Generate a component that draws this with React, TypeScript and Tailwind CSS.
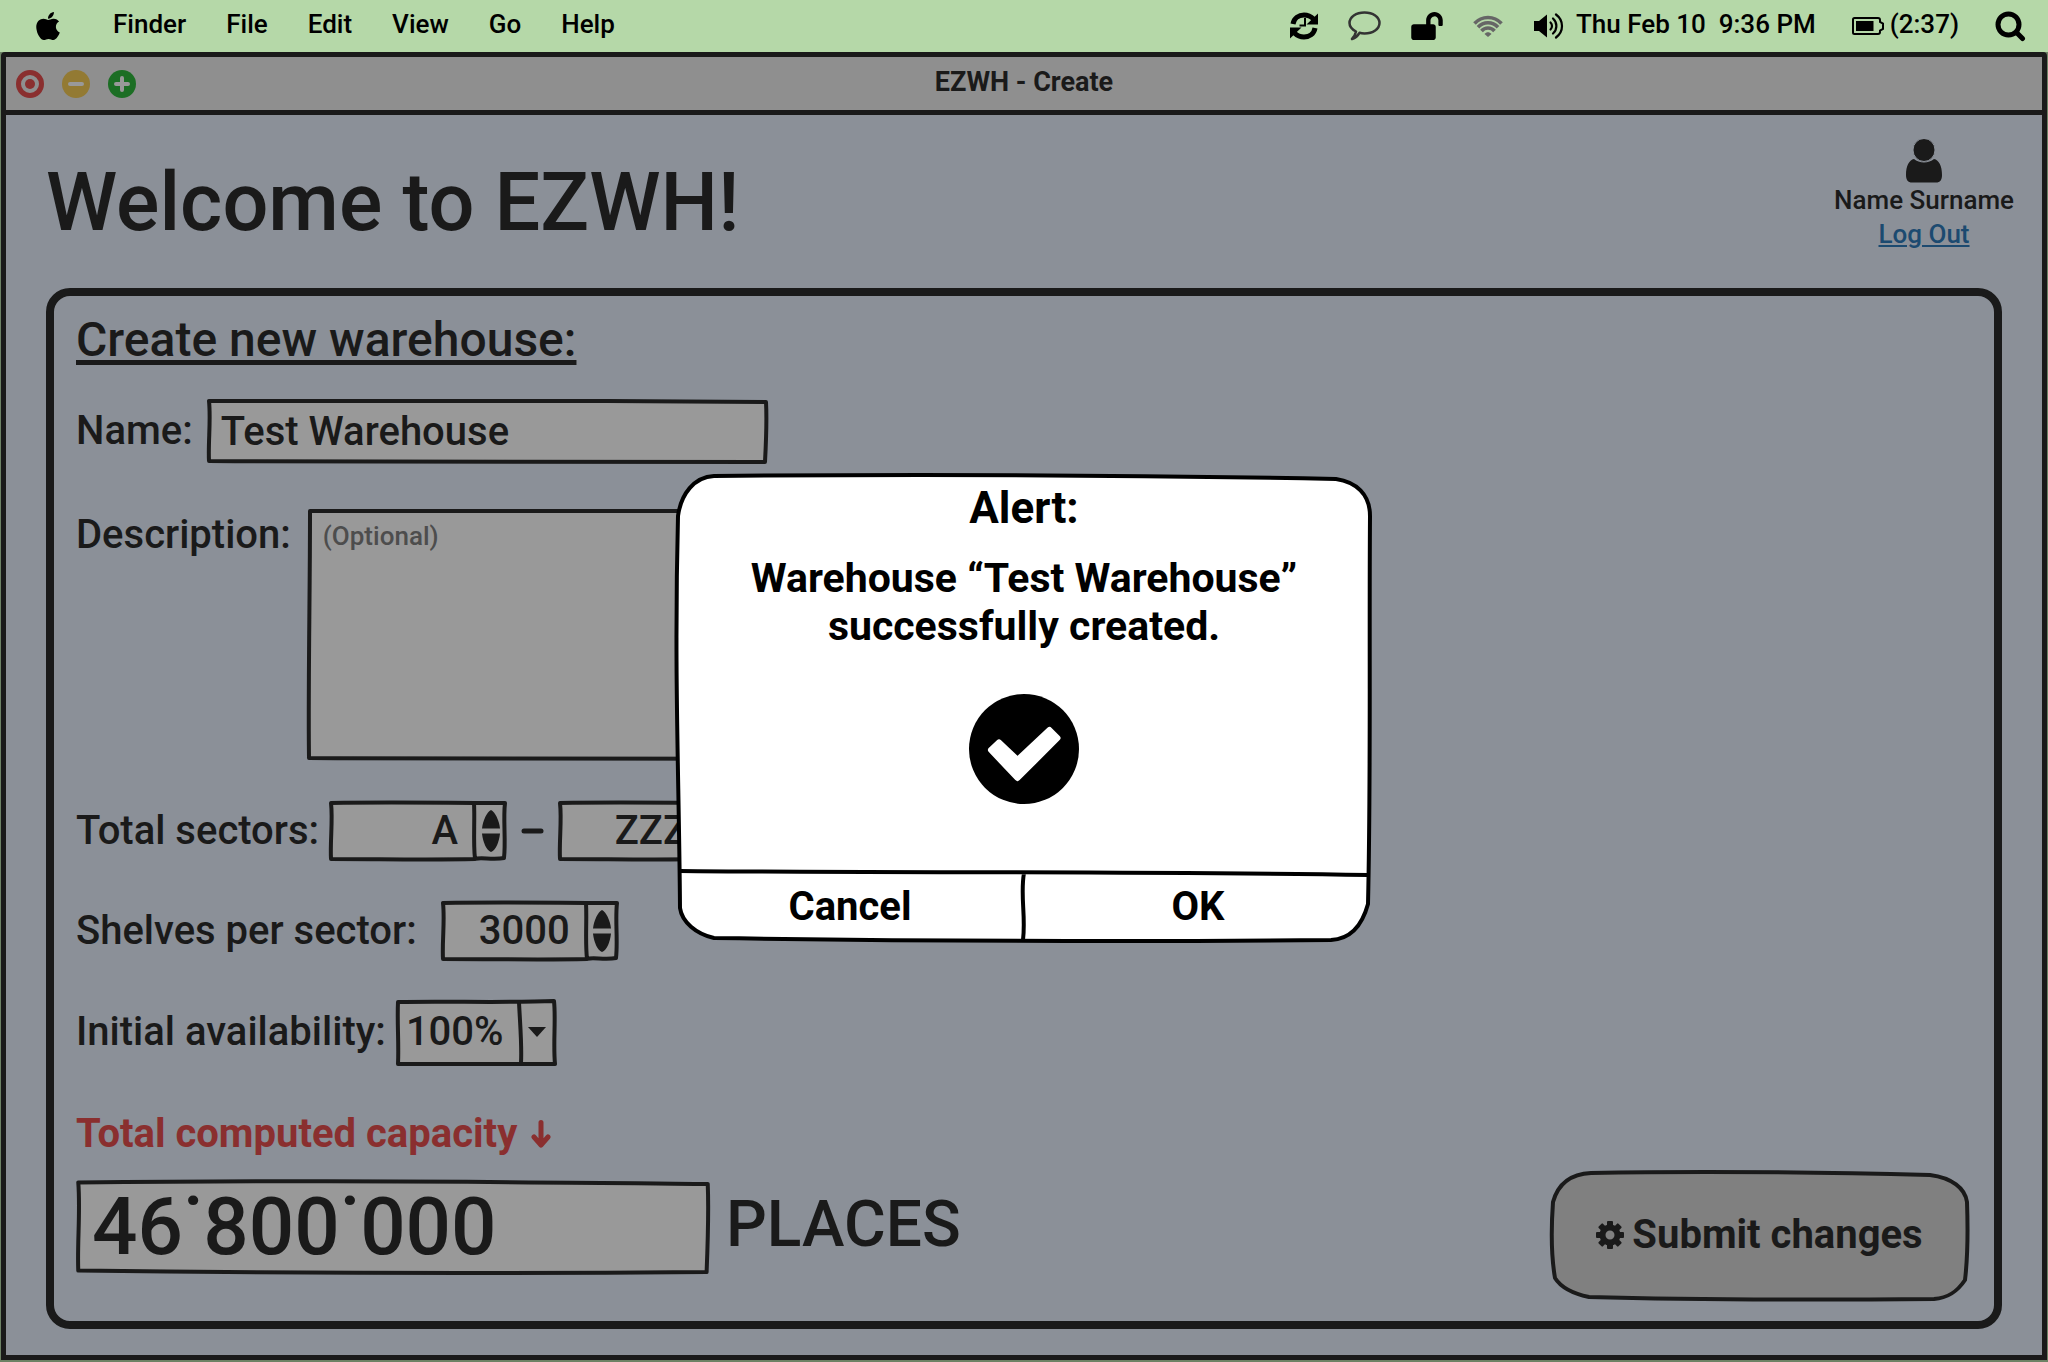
import type { ReactNode } from "react";
import { FaApple, FaLockOpen } from "react-icons/fa";

/* Hand-drawn outline that stretches to fill its positioned parent. */
function Sketch({ d, box = "0 0 100 100", fill = "none", stroke = "#1a1a1a", width = 4 }: {
  d: string; box?: string; fill?: string; stroke?: string; width?: number;
}) {
  return (
    <svg aria-hidden="true" viewBox={box} preserveAspectRatio="none" className="pointer-events-none absolute inset-0 h-full w-full overflow-visible">
      <path d={d} fill={fill} stroke={stroke} strokeWidth={width} strokeLinejoin="round" strokeLinecap="round" vectorEffect="non-scaling-stroke" />
    </svg>
  );
}

const SHORT_FRAME = "M2 3 C150 2 300 2 400 3 C470 3 530 4 558 4 C559 22 558 45 557 64 C400 65 200 65 2 63 C1 45 4 22 2 3Z";
const TALL_FRAME = "M3 2 C150 2 300 2 400 2 C470 2 530 3 558 3 C559 80 558 170 557 250 C400 251 200 251 2 249 C1 180 3 90 3 2Z";

function FieldFrame({ className, tall, children }: { className: string; tall?: boolean; children: ReactNode }) {
  return (
    <div className={`relative ${className}`}>
      <Sketch box={tall ? "0 0 560 252" : "0 0 560 66"} fill="#999999" d={tall ? TALL_FRAME : SHORT_FRAME} />
      {children}
    </div>
  );
}

function SyncIcon() {
  return (
    <svg viewBox="0 0 28 28" className="h-7 w-7" fill="none" aria-hidden="true">
      <path d="M3 12 C4 6 9 3 14 3 C18 3 21 4.500 23.500 7" stroke="#000" strokeWidth="5" />
      <path d="M28 1.500 V12.500 H16.500Z" fill="#000" />
      <path d="M25 16 C24 22 19 25 14 25 C10 25 7 23.500 4.500 21" stroke="#000" strokeWidth="5" />
      <path d="M0 26.500 V15.500 H11.500Z" fill="#000" />
      <path d="M15 6 V13.500 H9.500" stroke="#000" strokeWidth="2" />
    </svg>
  );
}

function ChatIcon() {
  return (
    <svg viewBox="0 0 33 30" className="h-[30px] w-[33px]" fill="none" aria-hidden="true">
      <path d="M8 20.500 C4 18.500 1.500 15.500 1.500 12 C1.500 6 8 1.500 16.500 1.500 C25 1.500 31.500 6 31.500 12 C31.500 18 25 22.500 16.500 22.500 C14.500 22.500 13 22.300 11.500 21.800 C10 24.500 7 27 4 28 C6 26 7.500 23 8 20.500Z" stroke="#333" strokeWidth="2.500" strokeLinejoin="round" />
    </svg>
  );
}

function WifiIcon() {
  return (
    <svg viewBox="0 0 30 22" className="h-[22px] w-[30px]" fill="none" stroke="#666" strokeWidth="3.600" aria-hidden="true">
      <path d="M1.500 8.500 C9 0.500 21 0.500 28.500 8.500" />
      <path d="M5 12.300 C10.500 6.300 19.500 6.300 25 12.300" />
      <path d="M8.500 16 C12 12 18 12 21.500 16" />
      <path d="M11.500 19 C13.500 16.700 16.500 16.700 18.500 19 L15 22Z" fill="#666" stroke="none" />
    </svg>
  );
}

function SpeakerIcon() {
  return (
    <svg viewBox="0 0 31 26" className="h-[26px] w-[31px]" fill="none" stroke="#000" strokeWidth="2.200" strokeLinecap="round" aria-hidden="true">
      <path d="M1 8 H6 L14 1.500 V24.500 L6 18 H1Z" fill="#000" stroke="none" />
      <path d="M17.500 9.500 C19.500 11.500 19.500 14.500 17.500 16.500" />
      <path d="M20 5.500 C24.500 9.500 24.500 16.500 20 20.500" />
      <path d="M23 1.500 C31 7.500 31 18.500 23 24.500" />
    </svg>
  );
}

function BatteryIcon() {
  return (
    <svg viewBox="0 0 32 18" className="h-[18px] w-8" fill="none" aria-hidden="true">
      <path d="M2.500 1 H26 Q28 1 28 3 V5 L31 6.500 V12 L28 13.500 V15 Q28 17 26 17 H2.500 Q1 17 1 15.500 V2.500 Q1 1 2.500 1Z" stroke="#000" strokeWidth="2" />
      <path d="M4 4 H21.500 V14 H4Z" fill="#000" />
    </svg>
  );
}

function SearchIcon() {
  return (
    <svg viewBox="0 0 31 31" className="h-[31px] w-[31px]" fill="none" stroke="#000" strokeWidth="5" strokeLinecap="round" aria-hidden="true">
      <circle cx="13.500" cy="13.500" r="10.500" />
      <path d="M21.500 21.500 L27.500 27.500" />
    </svg>
  );
}

function UserIcon() {
  return (
    <svg viewBox="0 0 36 44" className="h-11 w-9" fill="#1a1a1a" aria-hidden="true">
      <path d="M8 20 C13 24.500 23 24.500 28 20 C33 21 36 27 36 36 C36 41 34 43.500 30 43.500 H6 C2 43.500 0 41 0 36 C0 27 3 21 8 20Z" />
      <ellipse cx="18" cy="11" rx="11" ry="11.500" stroke="#8b9098" strokeWidth="1" />
    </svg>
  );
}

function GearIcon() {
  return (
    <svg viewBox="-14 -14 28 28" className="h-7 w-7" fill="#1a1a1a" aria-hidden="true">
      {[0, 45, 90, 135, 180, 225, 270, 315].map((a) => (
        <rect key={a} x="-3" y="-14" width="6" height="8" rx="1" transform={`rotate(${a})`} />
      ))}
      <circle r="7.500" fill="none" stroke="#1a1a1a" strokeWidth="6" />
    </svg>
  );
}

function Spinner({ id, label, value }: { id: string; label?: string; value: string }) {
  return (
    <div className="relative flex h-[60px] w-[178px]">
      <Sketch box="0 0 178 60" fill="#999999" d="M2 2 C60 1 120 2 176 2 C174 18 177 40 175 57 C165 59 150 56 146 58 C100 59 50 58 2 58 C1 40 4 20 2 2Z M145 2 C146 20 144 40 146 58" />
      <input id={id} aria-label={label} defaultValue={value} className="relative w-[145px] bg-transparent pr-4 text-right outline-none" />
      <div className="relative flex flex-1 flex-col items-center justify-center gap-1">
        <button type="button" aria-label="Increase" className="block">
          <svg viewBox="0 0 18 19" className="h-[19px] w-[18px]"><path d="M0 18.500 C1 10 5 2 9 0 C13 2 17 10 18 18.500Z" fill="#1a1a1a" /></svg>
        </button>
        <button type="button" aria-label="Decrease" className="block">
          <svg viewBox="0 0 18 19" className="h-[19px] w-[18px]"><path d="M0 0.500 C1 9 4 17 9 19 C14 17 17 9 18 0.500Z" fill="#1a1a1a" /></svg>
        </button>
      </div>
    </div>
  );
}

function MenuBar() {
  return (
    <header className="flex h-[52px] shrink-0 items-center justify-between bg-[#b5d8a8] pr-[22px] pl-8 text-[26px] leading-none font-medium text-black">
      <div className="flex items-center">
        <FaApple className="mr-[49px] h-8 w-8" aria-hidden="true" />
        <nav className="flex gap-10 pb-1">
          {["Finder", "File", "Edit", "View", "Go", "Help"].map((m) => (
            <button key={m} type="button">{m}</button>
          ))}
        </nav>
      </div>
      <div className="flex items-center">
        <div className="mr-3 flex items-center gap-[30px]">
          <SyncIcon />
          <ChatIcon />
          <FaLockOpen className="h-7 w-8" aria-hidden="true" />
          <WifiIcon />
          <SpeakerIcon />
        </div>
        <time className="pb-1 whitespace-pre">Thu Feb 10  9:36 PM</time>
        <span className="ml-9 flex items-center gap-1.5">
          <BatteryIcon />
          <span className="pb-1">(2:37)</span>
        </span>
        <button type="button" aria-label="Search" className="ml-9"><SearchIcon /></button>
      </div>
    </header>
  );
}

function TitleBar() {
  return (
    <div className="relative flex h-[58px] shrink-0 items-center border-b-[5px] border-[#1a1a1a] bg-[#8f8f8f] px-2.5">
      <div className="flex gap-[18px]">
        <button type="button" aria-label="Close">
          <svg viewBox="0 0 28 28" className="h-7 w-7"><circle cx="14" cy="14" r="11.500" fill="none" stroke="#8a2f2f" strokeWidth="5" /><circle cx="14" cy="14" r="5" fill="#8a2f2f" /></svg>
        </button>
        <button type="button" aria-label="Minimize">
          <svg viewBox="0 0 28 28" className="h-7 w-7"><circle cx="14" cy="14" r="14" fill="#937a33" /><path d="M8 14 H20" stroke="#999" strokeWidth="4" strokeLinecap="round" /></svg>
        </button>
        <button type="button" aria-label="Zoom">
          <svg viewBox="0 0 28 28" className="h-7 w-7"><circle cx="14" cy="14" r="14" fill="#1c6e24" /><path d="M8 14 H20 M14 8 V20" stroke="#999" strokeWidth="4" strokeLinecap="round" /></svg>
        </button>
      </div>
      <h2 className="absolute inset-x-0 pb-1 text-center text-[27px] leading-[30px] font-bold">EZWH - Create</h2>
    </div>
  );
}

function AlertDialog() {
  return (
    <div className="absolute inset-0 flex items-center justify-center pt-1">
      <div role="alertdialog" aria-labelledby="alert-title" aria-describedby="alert-text" className="relative flex h-[468px] w-[696px] flex-col text-center text-[40px] leading-12 font-bold text-black">
        <Sketch box="0 0 696 468" fill="#ffffff" stroke="#000000" d="M38 2 C250 0 450 1 660 5 C680 8 694 20 694 42 C693 180 695 300 692 430 C686 452 675 465 655 466 C450 468 250 467 38 464 C20 460 6 448 4 434 C3 300 -2 200 2 42 C5 20 18 3 38 2Z" />
        <div className="relative flex flex-1 flex-col items-center pt-1.5">
          <h2 id="alert-title" className="text-[44px] leading-[56px]">Alert:</h2>
          <p id="alert-text" className="mt-[18px] w-[600px] text-[41px]">Warehouse “Test Warehouse” <br />successfully created.</p>
          <svg viewBox="0 0 110 110" className="mt-11 h-[110px] w-[110px]" aria-hidden="true">
            <circle cx="55" cy="55" r="55" />
            <path d="M22 56 L30 48.500 L48.500 66 L80.500 36 L88.500 44 L48.500 84Z" fill="#fff" stroke="#fff" strokeWidth="6" strokeLinejoin="round" />
          </svg>
        </div>
        <div className="relative grid h-[71px] grid-cols-2">
          <Sketch box="0 0 696 71" stroke="#000000" d="M4 0 C200 2 450 0 692 4 M348 2 C344 24 350 45 347 69" />
          <button type="button" className="relative">Cancel</button>
          <button type="button" className="relative">OK</button>
        </div>
      </div>
    </div>
  );
}

export default function App() {
  return (
    <div className="flex min-h-screen flex-col bg-[#6d8265] font-['Roboto',sans-serif] text-[#1a1a1a]">
      <MenuBar />
      <main className="relative mx-px mb-0.5 flex flex-1 flex-col rounded-t-sm border-[5px] border-[#1a1a1a] bg-[#8b9098]">
        <TitleBar />
        <div className="flex items-start justify-between pt-6 pr-7 pb-[37px] pl-10 font-medium">
          <h1 className="self-end text-[81px] leading-[96px]">Welcome to EZWH!</h1>
          <div className="flex flex-col items-center text-[26px] leading-[34px]">
            <UserIcon />
            <span>Name Surname</span>
            <a href="#logout" className="text-[#1c4a70] underline decoration-2 underline-offset-2">Log Out</a>
          </div>
        </div>

        <form className="mx-10 mb-[26px] flex flex-1 flex-col rounded-3xl border-8 border-[#1a1a1a] pt-4 pr-[25px] pb-5 pl-[22px] text-[40px] leading-12 font-medium" onSubmit={(e) => e.preventDefault()}>
          <h2 className="self-start text-[48px] leading-[56px] underline decoration-[5px] underline-offset-4 [text-decoration-skip-ink:none]">Create new warehouse:</h2>

          <div className="mt-[30px] flex items-center gap-3.5">
            <label htmlFor="name">Name:</label>
            <FieldFrame className="h-[66px] w-[561px]">
              <input id="name" defaultValue="Test Warehouse" className="relative h-full w-full bg-transparent px-3.5 outline-none" />
            </FieldFrame>
          </div>

          <div className="mt-[45px] flex items-start gap-4">
            <label htmlFor="description" className="pt-0.5">Description:</label>
            <FieldFrame tall className="h-[252px] w-[561px]">
              <textarea id="description" placeholder="(Optional)" className="relative block h-full w-full resize-none bg-transparent px-4 py-2.5 text-[26px] leading-[34px] outline-none placeholder:text-[#4d4d4d]" />
            </FieldFrame>
          </div>

          <div className="mt-10 flex items-center gap-2.5">
            <label htmlFor="first-sector">Total sectors:</label>
            <div className="flex items-center gap-3.5">
              <Spinner id="first-sector" value="A" />
              <svg viewBox="0 0 23 6" className="h-1.5 w-[23px]" aria-hidden="true"><path d="M3 3 H20" stroke="#1a1a1a" strokeWidth="5" strokeLinecap="round" /></svg>
              <Spinner id="last-sector" label="Last sector" value="ZZZ" />
            </div>
          </div>

          <div className="mt-10 flex items-center gap-6">
            <label htmlFor="shelves">Shelves per sector:</label>
            <Spinner id="shelves" value="3000" />
          </div>

          <div className="mt-[38px] flex items-center gap-2.5">
            <label htmlFor="availability" className="pb-0.5">Initial availability:</label>
            <div className="relative h-[67px] w-[161px]">
              <Sketch box="0 0 161 67" fill="#999999" d="M2 3 C50 2 110 4 158 2 C160 20 157 45 159 65 C100 65 50 65 2 65 C3 45 1 22 2 3Z M123 3 C124 25 126 45 125 64" />
              <select id="availability" defaultValue="100%" className="relative h-full w-full appearance-none bg-transparent pb-0.5 pl-2.5 outline-none">
                <option>100%</option>
                <option>50%</option>
                <option>0%</option>
              </select>
              <svg viewBox="0 0 18 10" className="pointer-events-none absolute top-7 right-[11px] h-2.5 w-[18px]" aria-hidden="true"><path d="M0 0 H18 L9 10Z" fill="#1a1a1a" /></svg>
            </div>
          </div>

          <div className="mt-11 flex flex-1 items-end justify-between">
            <div className="flex flex-col self-start">
              <label htmlFor="capacity" className="flex items-center gap-3.5 font-bold text-[#8a2f2f]">
                Total computed capacity
                <svg viewBox="0 0 20 28" className="h-7 w-5" fill="none" stroke="#8a2f2f" strokeWidth="5" strokeLinecap="round" strokeLinejoin="round" role="img" aria-label="shown below">
                  <path d="M10 2.500 V24 M3 17 L10 25 L17 17" />
                </svg>
              </label>
              <div className="mt-5 flex items-center gap-4">
                <FieldFrame className="h-[97px] w-[634px]">
                  <input id="capacity" defaultValue="46˙800˙000" className="relative h-full w-full bg-transparent px-4 text-[80px] outline-none" />
                </FieldFrame>
                <span className="pb-1 text-[64px]">PLACES</span>
              </div>
            </div>
            <button type="submit" className="relative flex h-[131px] w-[419px] items-center justify-center gap-2 pb-0.5 font-bold">
              <Sketch box="0 0 419 131" fill="#808080" d="M41 3 C150 1 260 2 380 5 C402 8 415 18 417 32 C418 60 418 85 415 110 C407 122 398 128 384 129 C270 130 150 130 39 127 C20 123 10 116 5 108 C1 85 1 60 3 32 C8 14 20 4 41 3Z" />
              <span className="relative"><GearIcon /></span>
              <span className="relative">Submit changes</span>
            </button>
          </div>
        </form>
        <AlertDialog />
      </main>
    </div>
  );
}
